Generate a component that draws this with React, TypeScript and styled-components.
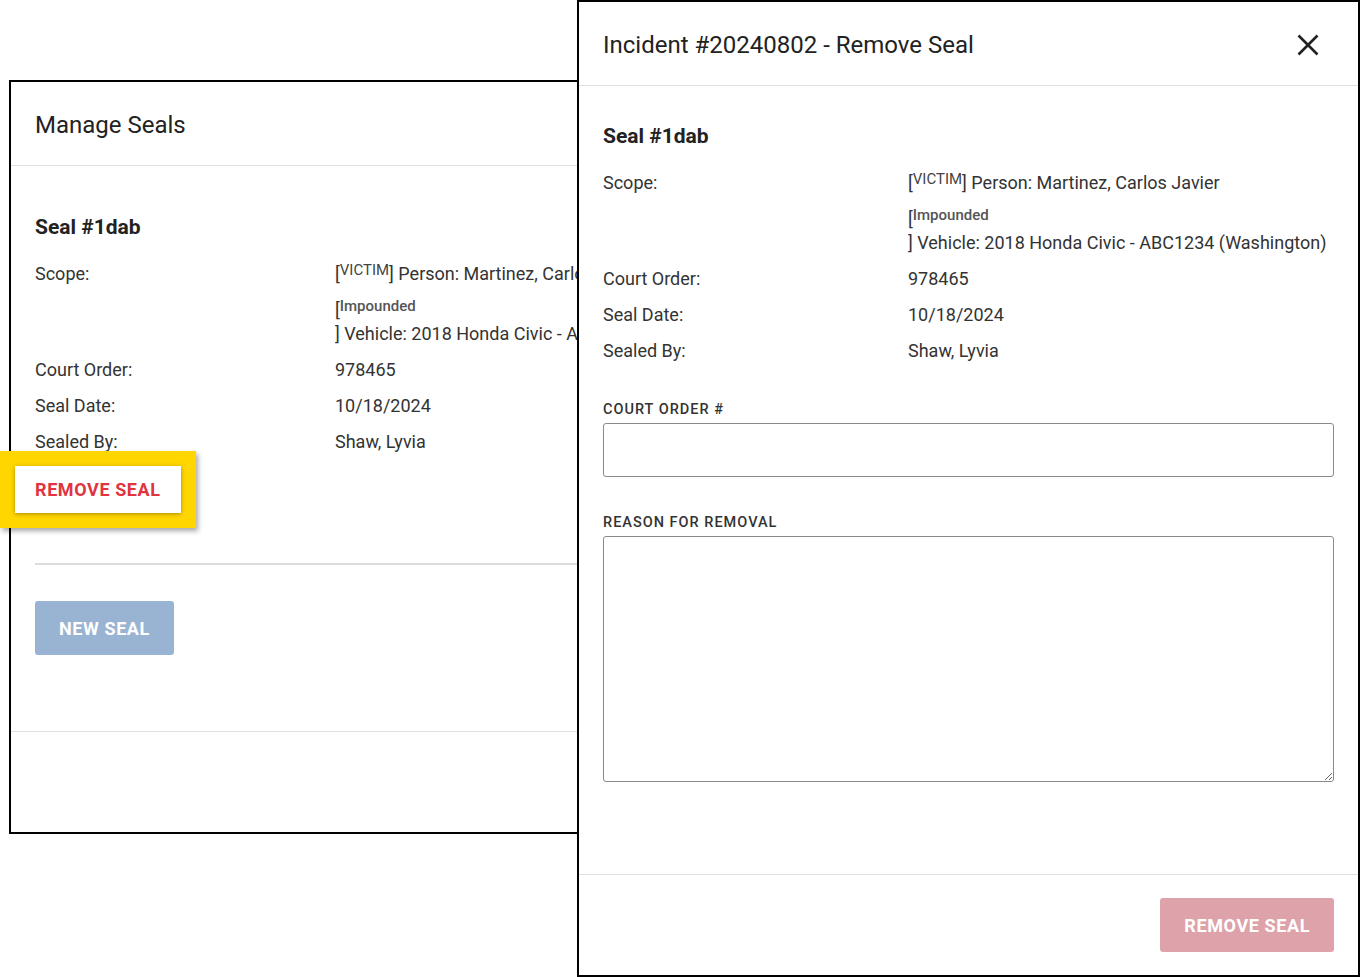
import styled, { createGlobalStyle } from 'styled-components'

const GlobalStyle = createGlobalStyle`
    html, body {
        margin: 0;
        padding: 0;
        background: #fff;
    }
    body {
        font-family: Roboto, "Liberation Sans", Arial, sans-serif;
        color: #333;
    }
    * {
        box-sizing: border-box;
    }
`

type TScopeItem = {
    tag: string
    text: string
    wrap?: boolean
}

type TSeal = {
    id: string
    scope: TScopeItem[]
    courtOrder: string
    sealDate: string
    sealedBy: string
}

const seal: TSeal = {
    id: '1dab',
    scope: [
        { tag: 'VICTIM', text: 'Person: Martinez, Carlos Javier' },
        { tag: 'Impounded', text: 'Vehicle: 2018 Honda Civic - ABC1234 (Washington)', wrap: true },
    ],
    courtOrder: '978465',
    sealDate: '10/18/2024',
    sealedBy: 'Shaw, Lyvia',
}

function SealDetails(props: { seal: TSeal; labelWidth: number }) {
    const { seal } = props
    return (
        <>
            <SealHeading>Seal #{seal.id}</SealHeading>
            <Details $labelWidth={props.labelWidth}>
                <Label>Scope:</Label>
                <Value>
                    {seal.scope.map(item =>
                        item.wrap ? (
                            <div key={item.tag}>
                                <Line $gap>
                                    [<Tag $muted>{item.tag}</Tag>
                                </Line>
                                <Line>] {item.text}</Line>
                            </div>
                        ) : (
                            <Line key={item.tag}>
                                [<Tag>{item.tag}</Tag>] {item.text}
                            </Line>
                        )
                    )}
                </Value>
                <Label>Court Order:</Label>
                <Value>{seal.courtOrder}</Value>
                <Label>Seal Date:</Label>
                <Value>{seal.sealDate}</Value>
                <Label>Sealed By:</Label>
                <Value>{seal.sealedBy}</Value>
            </Details>
        </>
    )
}

function CloseIcon() {
    return (
        <svg width="22" height="22" viewBox="0 0 22 22" fill="none">
            <path d="M1.5 1.5 L20.5 20.5 M20.5 1.5 L1.5 20.5" stroke="#222" strokeWidth="2.6" />
        </svg>
    )
}

export default function App() {
    return (
        <>
            <GlobalStyle />
            <Canvas>
                <ManagePanel>
                    <Header>
                        <Title>Manage Seals</Title>
                    </Header>
                    {/* the right edge of this panel sits under the remove dialog */}
                    <Body $top={49} $right={0}>
                        <SealDetails seal={seal} labelWidth={300} />
                        <Highlight>
                            <TextButton>Remove Seal</TextButton>
                        </Highlight>
                        <Divider />
                        <SolidButton $bg="#99b4d3">New Seal</SolidButton>
                    </Body>
                    <Footer />
                </ManagePanel>

                <RemovePanel>
                    <Header>
                        <Title>Incident #20240802 - Remove Seal</Title>
                        <CloseButton aria-label="Close">
                            <CloseIcon />
                        </CloseButton>
                    </Header>
                    <Body $top={38} $right={24}>
                        <SealDetails seal={seal} labelWidth={305} />
                        <Field $top={38}>
                            <FieldLabel>Court Order #</FieldLabel>
                            <Input type="text" />
                        </Field>
                        <Field $top={37}>
                            <FieldLabel>Reason for Removal</FieldLabel>
                            <TextArea />
                        </Field>
                    </Body>
                    <Footer>
                        <SolidButton $bg="#dea2aa">Remove Seal</SolidButton>
                    </Footer>
                </RemovePanel>
            </Canvas>
        </>
    )
}

const Canvas = styled.div`
    position: relative;
    width: 1360px;
    height: 977px;
    overflow: hidden;
    background: #fff;
`

const Panel = styled.section`
    position: absolute;
    display: flex;
    flex-direction: column;
    background: #fff;
    border: 2px solid #000;
`

const ManagePanel = styled(Panel)`
    left: 9px;
    top: 80px;
    width: 570px;
    height: 754px;
    z-index: 1;
`

const RemovePanel = styled(Panel)`
    left: 577px;
    top: 0;
    width: 783px;
    height: 977px;
    z-index: 2;
`

const Header = styled.header`
    height: 84px;
    flex: none;
    display: flex;
    align-items: center;
    justify-content: space-between;
    padding: 2px 24px 0;
    border-bottom: 1px solid #e0e0e0;
`

const Title = styled.h1`
    margin: 0;
    font-size: 24px;
    font-weight: 400;
    color: #222;
    white-space: nowrap;
`

const CloseButton = styled.button`
    display: flex;
    padding: 0;
    margin-right: 15px;
    border: none;
    background: none;
    cursor: pointer;
`

const Body = styled.div<{ $top: number; $right: number }>`
    flex: 1;
    display: flex;
    flex-direction: column;
    align-items: flex-start;
    padding: ${p => p.$top}px ${p => p.$right}px 0 24px;
`

const SealHeading = styled.h2`
    margin: 0 0 23px;
    font-size: 21px;
    line-height: 24px;
    font-weight: 700;
    color: #222;
`

const Details = styled.div<{ $labelWidth: number }>`
    display: grid;
    grid-template-columns: ${p => p.$labelWidth}px minmax(0, 1fr);
    row-gap: 12px;
    width: 100%;
    font-size: 18px;
    line-height: 24px;
    white-space: nowrap;
`

const Label = styled.div`
    color: #333;
`

const Value = styled.div`
    overflow: hidden;
    color: #333;
`

const Line = styled.div<{ $gap?: boolean }>`
    margin-top: ${p => (p.$gap ? '12px' : '0')};
`

const Tag = styled.span<{ $muted?: boolean }>`
    font-size: 15px;
    vertical-align: 5px;
    line-height: 1;
    color: ${p => (p.$muted ? '#555' : '#444')};
    font-weight: ${p => (p.$muted ? 500 : 400)};
`

const Highlight = styled.div`
    margin: -3px 0 0 -35px;
    padding: 15px;
    background: #ffd600;
    box-shadow: 2px 3px 5px rgba(0, 0, 0, 0.35);
`

const TextButton = styled.button`
    display: block;
    height: 47px;
    padding: 0 20px;
    border: none;
    background: #fff;
    box-shadow: 0 1px 4px rgba(0, 0, 0, 0.35);
    color: #e0343f;
    font-family: inherit;
    font-size: 18px;
    font-weight: 700;
    letter-spacing: 0.6px;
    text-transform: uppercase;
    cursor: pointer;
`

const Divider = styled.hr`
    align-self: stretch;
    margin: 35px 0 0;
    border: none;
    border-top: 2px solid #dcdcdc;
`

const SolidButton = styled.button<{ $bg: string }>`
    height: 54px;
    padding: 0 24px;
    margin-top: 36px;
    border: none;
    border-radius: 3px;
    background: ${p => p.$bg};
    color: #fff;
    font-family: inherit;
    font-size: 18px;
    font-weight: 700;
    letter-spacing: 0.6px;
    text-transform: uppercase;
    cursor: pointer;
`

const Field = styled.label<{ $top: number }>`
    display: flex;
    flex-direction: column;
    align-self: stretch;
    margin-top: ${p => p.$top}px;
`

const FieldLabel = styled.span`
    margin-bottom: 5px;
    font-size: 14.5px;
    line-height: 17px;
    font-weight: 500;
    letter-spacing: 1px;
    text-transform: uppercase;
    color: #333;
`

const Input = styled.input`
    height: 54px;
    border: 1px solid #8a8a8a;
    border-radius: 3px;
    padding: 0 12px;
    font-family: inherit;
    font-size: 18px;
`

const TextArea = styled.textarea`
    height: 246px;
    border: 1px solid #8a8a8a;
    border-radius: 3px;
    padding: 12px;
    font-family: inherit;
    font-size: 18px;
    resize: vertical;
`

const Footer = styled.footer`
    height: 101px;
    flex: none;
    display: flex;
    align-items: center;
    justify-content: flex-end;
    padding: 0 24px;
    border-top: 1px solid #e0e0e0;

    ${SolidButton} {
        margin-top: 0;
    }
`
